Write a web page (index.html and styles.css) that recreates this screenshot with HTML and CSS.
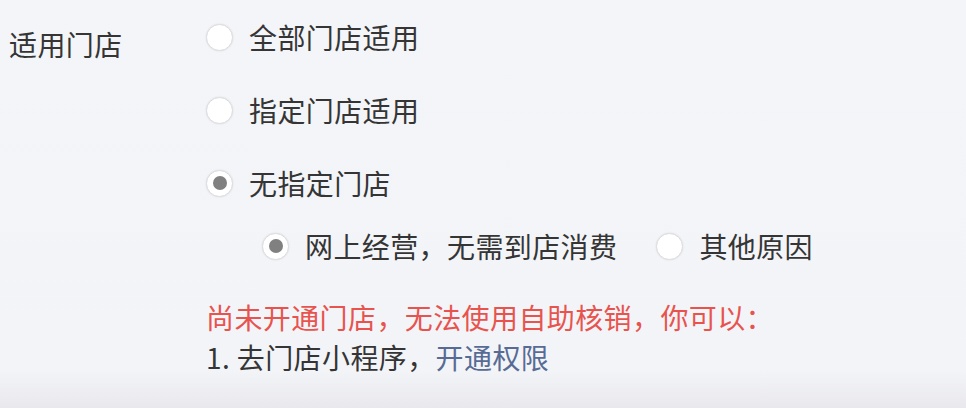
FILE: index.html
```html
<!DOCTYPE html>
<html lang="zh-CN">
<head>
<meta charset="utf-8">
<title>适用门店</title>
<link rel="stylesheet" href="styles.css">
</head>
<body>
<div class="form">
  <div class="label">适用门店</div>
  <div class="options">
    <div class="option"><span class="radio"></span><span>全部门店适用</span></div>
    <div class="option"><span class="radio"></span><span>指定门店适用</span></div>
    <div class="option"><span class="radio checked"></span><span>无指定门店</span></div>
    <div class="suboptions">
      <div class="option"><span class="radio checked"></span><span>网上经营，无需到店消费</span></div>
      <div class="option"><span class="radio"></span><span>其他原因</span></div>
    </div>
    <div class="notice">
      <p class="warn">尚未开通门店，无法使用自助核销，你可以：</p>
      <p class="step">1. 去门店小程序，<a class="link" href="#">开通权限</a></p>
    </div>
  </div>
</div>
</body>
</html>
```

FILE: styles.css
```css
html, body {
  margin: 0;
  height: 100%;
}
body {
  background: linear-gradient(to bottom, #f4f5f9 0, #f3f4f8 370px, #e9e9ed 408px);
  font-family: "Noto Sans CJK SC", "Noto Sans", sans-serif;
  color: #353535;
  font-size: 28px;
  line-height: 40px;
  letter-spacing: 0.4px;
}
.form {
  display: flex;
  padding-top: 17px;
}
.label {
  width: 197px;
  padding-left: 9px;
  padding-top: 7px;
  flex-shrink: 0;
}
.options {
  display: flex;
  flex-direction: column;
  gap: 33px;
}
.option {
  display: flex;
  align-items: center;
  gap: 16px;
  height: 40px;
}
.radio {
  width: 25px;
  height: 25px;
  border-radius: 50%;
  background: #fff;
  border: 1px solid #dcdcdf;
  box-shadow: 0 0 2px rgba(0,0,0,0.1);
  display: flex;
  align-items: center;
  justify-content: center;
  flex-shrink: 0;
}
.radio.checked::after {
  content: "";
  width: 14px;
  height: 14px;
  border-radius: 50%;
  background: #808080;
}
.suboptions {
  display: flex;
  gap: 39px;
  padding-left: 56px;
  margin-top: -10px;
}
.notice {
  margin-top: -2px;
}
.notice p {
  margin: 0;
}
.warn {
  color: #e8534e;
}
.link {
  color: #576b95;
  text-decoration: none;
}
```
